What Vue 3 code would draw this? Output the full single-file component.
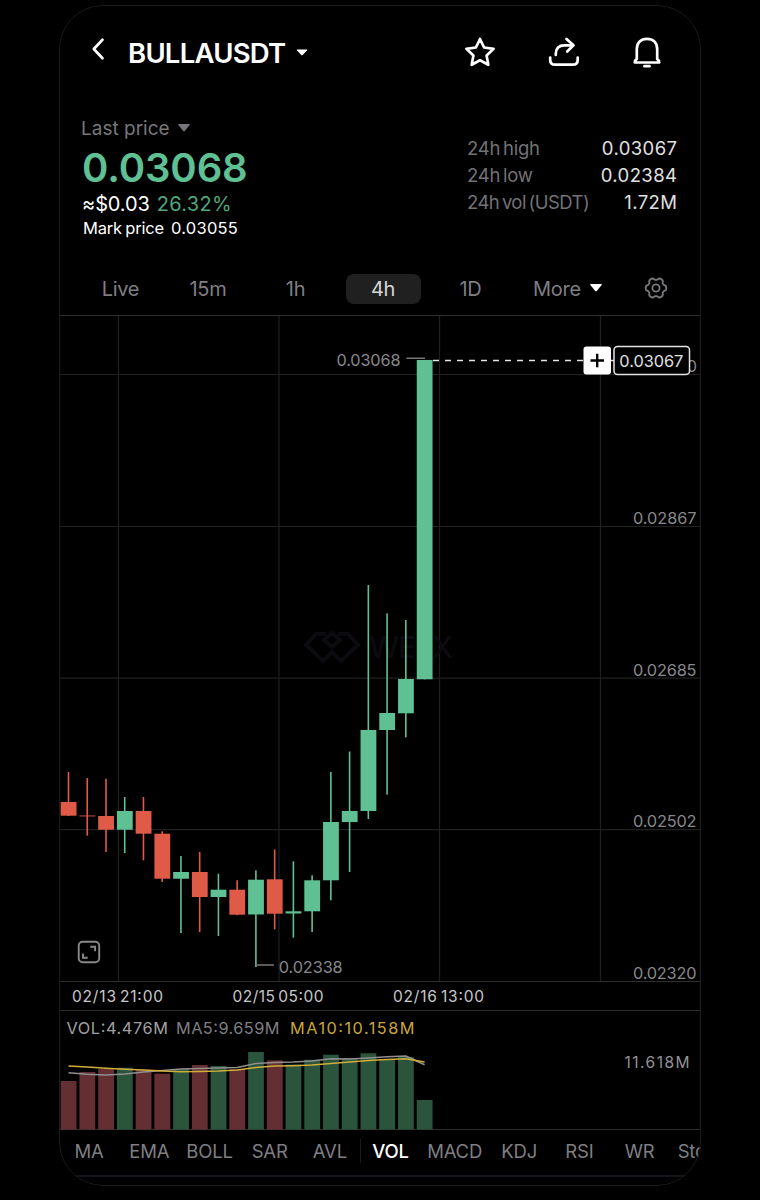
<script setup>
const tabs = ['Live', '15m', '1h', '4h', '1D']
const activeTab = '4h'
const stats = [
  { label: '24h high', value: '0.03067', cls: 'high' },
  { label: '24h low', value: '0.02384', cls: 'low' },
  { label: '24h vol (USDT)', value: '1.72M', cls: 'vol' },
]
const indicators = ['MA', 'EMA', 'BOLL', 'SAR', 'AVL', 'VOL', 'MACD', 'KDJ', 'RSI', 'WR', 'Stoch']

// direction, high, body top, body bottom, low, volume top
const raw = [
  ['r', 772, 802, 815.7, 816, 1081],
  ['r', 778, 815.5, 816.4, 835.7, 1072],
  ['r', 778.7, 816, 829.7, 852, 1069],
  ['g', 797, 811, 829.7, 853, 1067.7],
  ['r', 797, 811, 833.7, 860.3, 1069.7],
  ['r', 831.3, 833.7, 878.7, 882, 1073.7],
  ['g', 856, 872, 878.7, 933, 1069],
  ['r', 852, 872, 897, 932, 1065],
  ['g', 873.7, 889.7, 897, 936, 1066],
  ['r', 880.3, 889.7, 914.7, 915.3, 1069.3],
  ['g', 870.3, 879.7, 914.5, 967, 1052],
  ['r', 849.5, 879.3, 913.7, 929.3, 1060.3],
  ['g', 861.3, 911.3, 913.5, 937.7, 1064.5],
  ['g', 875.3, 880.3, 911.3, 932, 1059.7],
  ['g', 772, 822, 880.3, 900.3, 1054.7],
  ['g', 751.5, 811, 822, 872, 1058],
  ['g', 585, 730, 811, 819, 1053.3],
  ['g', 613.3, 713, 730, 794.7, 1059],
  ['g', 620, 679, 713.3, 737.3, 1057],
  ['g', 360, 360, 679.3, 679.3, 1100],
]
const candles = raw.map(([d, high, top, bottom, low, vol], i) => ({
  x: 68.5 + i * 18.74, d, high, top, bottom, low, vol,
}))
const ma10 = [1066, 1067, 1068.3, 1069.3, 1070, 1071, 1071.7, 1071.5, 1071, 1070, 1067.5, 1066, 1065.7, 1065, 1063.5, 1062, 1060.5, 1059.5, 1058.7, 1062]
const ma5 = [1072.7, 1074.3, 1075, 1074, 1072, 1070.5, 1069, 1068.5, 1068, 1067.5, 1063.5, 1062.5, 1062, 1061, 1058.7, 1059, 1058, 1056.7, 1056, 1064.7]
const line = (ys) => ys.map((y, i) => `${(68.5 + i * 18.74).toFixed(1)},${y}`).join(' ')

// six-toothed gear outline
const gear = Array.from({ length: 72 }, (_, i) => {
  const a = (i * Math.PI) / 36
  const r = 9.1 + 1.15 * Math.tanh(1.8 * Math.cos(6 * a) + 0.5)
  return `${(12 + r * Math.cos(a)).toFixed(2)},${(12 + r * Math.sin(a)).toFixed(2)}`
}).join(' ')

const prices = [
  { t: '0.02867', y: 524 },
  { t: '0.02685', y: 675.5 },
  { t: '0.02502', y: 827 },
  { t: '0.02320', y: 978.5 },
]
const dates = [
  { t: '02/13 21:00', x: 72 },
  { t: '02/15 05:00', x: 232.5 },
  { t: '02/16 13:00', x: 393 },
]
</script>

<template>
  <div class="page">
    <main class="phone">
      <header class="top">
        <svg class="back" width="14" height="24" viewBox="0 0 14 24"><path d="M11.500 2.800 2.800 12l8.700 9.200" /></svg>
        <h1>BULLAUSDT</h1>
        <svg class="caret" width="12" height="7" viewBox="0 0 12 7"><path d="M1.2.5h9.6q.8.1.3.8L6.7 6q-.7.6-1.4 0L.9 1.3Q.4.6 1.2.5Z" /></svg>
        <div class="actions">
          <svg width="34" height="34" viewBox="0 0 34 34"><path d="m17 4 4.100 8.500 9.500 1.300-7 6.600 1.700 9.400-8.300-4.500L8.700 29.800l1.700-9.400-7-6.600 9.500-1.300Z" /></svg>
          <svg width="34" height="34" viewBox="0 0 34 34"><path d="M3.200 22.500v2.200c0 3.300 1.700 5 5 5h17.500c3.300 0 5-1.700 5-5v-2.200M8.800 20v-1.500c.2-5.500 3.200-8.200 8.500-8.200h8.500M19.500 4l7 6.300-6.300 6.200" /></svg>
          <svg width="34" height="34" viewBox="0 0 34 34"><path d="M6.800 24V14C6.800 7.500 11 3.800 17 3.800S27.200 7.500 27.200 14v10q2 1.300 2 3.500H4.800q0-2.200 2-3.500Z" /><path d="M14.500 31.200h5" /></svg>
        </div>
      </header>

      <section class="summary">
        <div class="quote">
          <div class="last"><span>Last price</span><svg class="caret" width="12" height="8" viewBox="0 0 12 8"><path d="M.8 0h10.400q1 .2.4 1L6.800 7q-.8.700-1.600 0L.4 1Q-.2.2.8 0Z" /></svg></div>
          <div class="price">0.03068</div>
          <div class="approx"><span>≈$0.03</span><span class="change">26.32%</span></div>
          <div class="mark"><span class="mark-label">Mark price</span><span class="mark-value">0.03055</span></div>
        </div>
        <dl class="stats">
          <div v-for="s in stats" :key="s.label" :class="s.cls"><dt>{{ s.label }}</dt><dd>{{ s.value }}</dd></div>
        </dl>
      </section>

      <nav class="tabs">
        <span v-for="t in tabs" :key="t" class="tab" :class="{ active: t === activeTab }">{{ t }}</span>
        <span class="more">More<svg class="caret" width="12" height="8" viewBox="0 0 12 8"><path d="M.8 0h10.400q1 .2.4 1L6.800 7q-.8.700-1.600 0L.4 1Q-.2.2.8 0Z" /></svg></span>
        <svg class="gear" width="24" height="24" viewBox="0 0 24 24"><polygon :points="gear" /><circle cx="12" cy="12" r="3.600" /></svg>
      </nav>

      <svg class="chart" width="642" height="815" viewBox="59 315 642 815">
        <g class="grid">
          <path d="M118.500 316v665M279 316v665M439.500 316v665M600.500 316v665" />
          <path d="M60 374.500h640M60 526.500h640M60 678.200h640M60 829.700h640" />
        </g>
        <g class="edges">
          <path d="M60 315.500h640M60 981.500h640M60 1010.500h640M60 1129.500h640" />
          <path d="M59.500 315v815M700.500 315v815" />
        </g>
        <g class="watermark">
          <path d="m332 633 8 7-8 7-8-7ZM326 634h-10l-10 11 17 16 9-9 9 9 17-16-10-11h-10" />
          <text x="369" y="657.500" textLength="84">WEEX</text>
        </g>
        <g v-for="c in candles" :key="c.x" :class="c.d">
          <rect :x="c.x - 0.8" :y="c.high" width="1.600" :height="c.low - c.high" />
          <rect :x="c.x - 7.8" :y="c.top" width="15.800" :height="c.bottom - c.top" />
          <rect class="volume" :x="c.x - 7.8" :y="c.vol" width="15.800" :height="1129.5 - c.vol" />
        </g>
        <polyline class="ma5" :points="line(ma5)" />
        <polyline class="ma10" :points="line(ma10)" />

        <path class="leader" d="M406.500 358.200h18.500M256 965h18" />
        <path class="current" d="M433 360.500H584M611 360.500h4" />
        <g class="muted">
          <text x="336.500" y="366" textLength="64">0.03068</text>
          <text x="278.700" y="973" textLength="64">0.02338</text>
          <text x="633" y="371.500" textLength="64">0.03050</text>
          <text v-for="p in prices" :key="p.t" x="633" :y="p.y" textLength="63.500">{{ p.t }}</text>
          <text x="624.500" y="1068" textLength="65" class="small">11.618M</text>
        </g>
        <rect class="plus-box" x="583.500" y="346.500" width="27.500" height="28" rx="3" />
        <path class="plus" d="M590.500 360.500h13.500M597.200 353.700v13.500" />
        <rect class="price-box" x="614" y="346.500" width="75.500" height="28" rx="3.500" />
        <text class="box-text" x="619.300" y="366.500" textLength="64">0.03067</text>

        <g class="dates"><text v-for="d in dates" :key="d.t" :x="d.x" y="1002.300" textLength="91">{{ d.t }}</text></g>
        <text class="vol-text" x="66.500" y="1034.200" textLength="101.500">VOL:4.476M</text>
        <text class="ma5-text" x="176" y="1034.200" textLength="103.500">MA5:9.659M</text>
        <text class="ma10-text" x="290" y="1034.200" textLength="124.500">MA10:10.158M</text>
        <g class="expand">
          <rect x="78.700" y="941.800" width="20.500" height="20.500" rx="4" />
          <path d="M90.300 946.700h4.800v4.500M83 953.500v4.300h4.700" />
        </g>
      </svg>

      <nav class="indicators">
        <span v-for="n in indicators" :key="n" :class="['ind', n.toLowerCase()]">{{ n }}</span>
      </nav>
    </main>
  </div>
</template>

<style>
html, body { background: #000; }
</style>

<style scoped>
.page { width: 760px; height: 1200px; box-sizing: border-box; padding: 5px 59px 0; background: #000; overflow: hidden; font-family: Inter, "Open Sans", sans-serif; color: #fff; }
.phone { position: relative; width: 642px; height: 1181px; box-sizing: border-box; padding-top: 1px; border-radius: 44px; overflow: hidden; display: flex; flex-direction: column; }
.phone::after { content: ""; position: absolute; inset: 0; border: 1.500px solid #1c1c1c; border-radius: 44px; pointer-events: none; }
svg { display: block; flex: none; }
.caret { fill: currentColor; }
h1, dl, dd { margin: 0; }
span, dt, dd, h1, .price { white-space: nowrap; }

.top { height: 92px; display: flex; align-items: center; padding: 0 37px 0 32px; }
.back { margin-top: -6px; }
.back path, .actions path { fill: none; stroke: #fff; stroke-width: 2.7; stroke-linecap: round; stroke-linejoin: round; }
.top h1 { margin-left: 23px; margin-top: 2px; width: 168px; font-size: 27.500px; line-height: 34px; font-weight: 600; letter-spacing: -0.750px; }
.actions { margin-left: auto; display: flex; gap: 49.500px; }

.summary { height: 164px; display: flex; justify-content: space-between; padding: 0 24px 0 22px; }
.quote { padding-top: 19px; }
.last { display: flex; align-items: center; color: #77777b; font-size: 19px; line-height: 24px; gap: 8px; }
.last .caret { margin-top: -3px; }
.price { margin: 2px 0 0 1px; font-size: 40px; line-height: 50px; font-weight: 600; color: #5fc094; letter-spacing: -0.100px; }
.approx { display: flex; gap: 7px; margin: -2px 0 0 1px; font-size: 20px; line-height: 26px; letter-spacing: -0.100px; }
.change { color: #4da77c; letter-spacing: 0.300px; }
.mark { display: flex; gap: 7px; margin: -1px 0 0 2px; font-size: 16.500px; line-height: 24px; }
.mark-label { letter-spacing: -0.200px; word-spacing: -1px; }
.mark-value { letter-spacing: 0.250px; }
.stats { width: 210px; padding-top: 37px; font-size: 18.500px; }
.stats div { display: flex; justify-content: space-between; line-height: 27px; }
.stats dt { color: #727276; letter-spacing: -0.250px; word-spacing: -2px; }
.stats dd { color: #e0e0e0; letter-spacing: 0.400px; margin-right: -0.400px; }
.stats .vol dt { letter-spacing: -0.550px; }

.tabs { height: 53px; display: flex; align-items: center; padding-left: 24px; font-size: 20px; color: #7f7f83; }
.tab { flex: none; width: 75px; height: 30px; line-height: 31px; margin-right: 12.500px; text-align: center; border-radius: 8px; letter-spacing: -0.300px; }
.tab.active { background: #202021; color: #d7d7d9; }
.more { display: flex; align-items: center; gap: 9.500px; margin-left: 12.500px; letter-spacing: -0.250px; }
.more .caret { color: #fff; margin-top: -2px; }
.gear { margin-left: 42px; margin-top: -1px; fill: none; stroke: #77777b; stroke-width: 1.900; stroke-linejoin: round; }

.grid path, .edges path { fill: none; stroke: #202020; stroke-width: 1.2; }
.edges path { stroke: #303030; }
.watermark path { fill: none; stroke: #0b0b10; stroke-width: 4; }
.watermark text { fill: #0b0b10; font-size: 30px; font-weight: 500; }
.r { fill: #e05a48; }
.g { fill: #5fc094; }
.r .volume { fill: #642f32; }
.g .volume { fill: #2a543c; }
.ma5, .ma10 { fill: none; stroke: #8f8f8f; stroke-width: 1.500; stroke-linejoin: round; }
.ma10 { stroke: #d0ae3a; }
.leader { stroke: #77777b; stroke-width: 1.500; }
.current { stroke: #e4e4e4; stroke-width: 1.400; stroke-dasharray: 6 6; }
text { font-size: 16.300px; }
.muted text { fill: #88888c; }
.muted .small { font-size: 15.500px; fill: #929296; }
.plus-box { fill: #fff; }
.plus { stroke: #000; stroke-width: 2.400; }
.price-box { fill: #000; stroke: #e4e4e4; stroke-width: 1.500; }
.chart .box-text { fill: #e0e0e0; }
.dates text { fill: #c8c8ca; font-size: 15.500px; word-spacing: -2px; }
.vol-text { fill: #a0a0a3; }
.ma5-text { fill: #7f7f83; }
.ma10-text { fill: #c9a63c; }
.expand { fill: none; stroke: #88888b; stroke-width: 1.900; }

.indicators { height: 47px; display: flex; align-items: center; padding-bottom: 4px; border-bottom: 2.500px solid #14141a; color: #7f7f83; font-size: 18.500px; line-height: 24px; box-sizing: border-box; letter-spacing: -0.200px; }
.ind { flex: none; width: 60.200px; text-align: center; box-sizing: border-box; }
.ind.vol { color: #fff; font-weight: 500; border-left: 1px solid #1c1c1c; }
.ind.macd { width: 69px; }
.ind.stoch { text-align: left; padding-left: 8px; }
</style>
